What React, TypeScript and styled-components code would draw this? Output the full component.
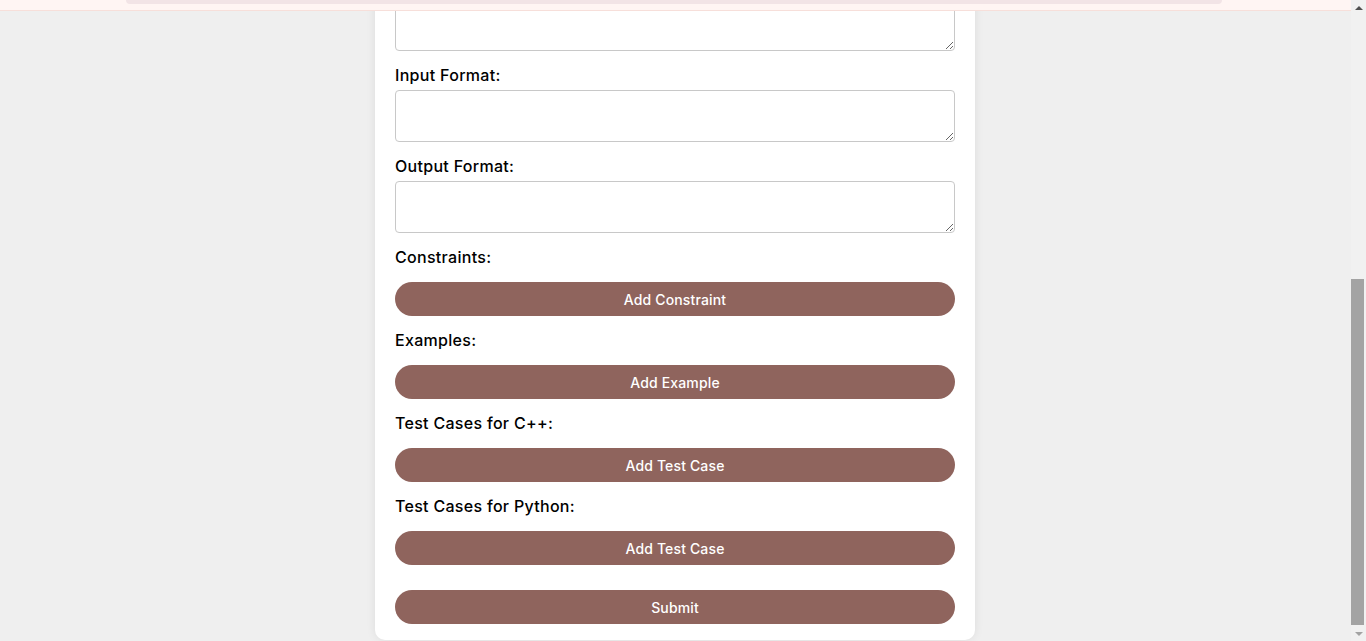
import React, { useEffect, useLayoutEffect, useState } from "react";
import styled, { createGlobalStyle } from "styled-components";

const Global = createGlobalStyle`
  *, *::before, *::after { box-sizing: border-box; }
  html { scroll-behavior: auto; }
  body {
    margin: 0;
    background: #efefef;
    font-family: "Inter", "Open Sans", "Liberation Sans", sans-serif;
    color: #000;
  }
`;

const Header = styled.header`
  position: fixed;
  top: 0;
  left: 0;
  right: 15px;
  height: 11px;
  background: #fff5f3;
  border-bottom: 1px solid #f7dfda;
  z-index: 10;
  display: flex;
  padding: 0 129px 0 126px;
`;

const NavPill = styled.div`
  flex: 1;
  height: 4px;
  background: #f2e4e6;
  border-radius: 0 0 6px 6px;
`;

const ScrollBar = styled.div`
  position: fixed;
  top: 0;
  right: 0;
  bottom: 0;
  width: 15px;
  background: #f1f1f1;
  display: flex;
  flex-direction: column;
  z-index: 20;
`;

const Arrow = styled.div<{ $down?: boolean; $color: string }>`
  height: 15px;
  flex: none;
  display: flex;
  align-items: center;
  justify-content: center;
  &::after {
    content: "";
    width: 0;
    height: 0;
    border-left: 4px solid transparent;
    border-right: 4px solid transparent;
    ${(p) =>
      p.$down
        ? `border-top: 4px solid ${p.$color};`
        : `border-bottom: 4px solid ${p.$color};`}
  }
`;

const Track = styled.div`
  flex: 1;
  display: flex;
  flex-direction: column;
  justify-content: flex-end;
  padding: 0 2px 1px 0;
`;

const Thumb = styled.div`
  width: 100%;
  background: #a3a3a3;
`;

const Main = styled.main`
  padding: 60px 16px 1px 0;
`;

const Card = styled.div`
  width: 600px;
  margin: 0 auto;
  background: #fff;
  border-radius: 10px;
  box-shadow: 0 0 10px rgba(0, 0, 0, 0.08);
  padding: 20px 20px 16px;
  display: flex;
  flex-direction: column;
`;

const Title = styled.h2`
  margin: 0 0 20px;
  height: 30px;
  line-height: 30px;
  font-size: 24px;
  font-weight: 600;
  text-align: center;
`;

const Field = styled.div<{ $last?: boolean }>`
  display: flex;
  flex-direction: column;
  margin-bottom: ${(p) => (p.$last ? "25px" : "14px")};
`;

const Label = styled.label`
  display: block;
  font-size: 16px;
  line-height: 19px;
  height: 19px;
  padding-top: 1px;
  font-weight: 500;
  color: #000;
  margin-bottom: 6px;
  letter-spacing: 0.3px;
`;

const Input = styled.input`
  display: block;
  width: 100%;
  height: 38px;
  border: 1px solid #ccc;
  border-radius: 4px;
  padding: 8px;
  font: inherit;
`;

const TextArea = styled.textarea<{ $h: number }>`
  display: block;
  width: 100%;
  height: ${(p) => p.$h}px;
  border: 1px solid #c8c8c8;
  border-radius: 4px;
  padding: 8px;
  font: inherit;
  resize: vertical;
  background: #fff;
`;

const Button = styled.button<{ $gap?: boolean }>`
  display: block;
  width: 100%;
  height: 34px;
  margin-top: ${(p) => (p.$gap ? "10px" : "0")};
  border: none;
  border-radius: 17px;
  background: #8f645d;
  color: #fff;
  font-family: "Inter", "Open Sans", "Liberation Sans", sans-serif;
  font-size: 14px;
  font-weight: 450;
  letter-spacing: 0.15px;
  cursor: pointer;
`;

export default function App() {
  const [thumb, setThumb] = useState(346);

  useLayoutEffect(() => {
    const doc = document.documentElement;
    window.scrollTo(0, doc.scrollHeight);
    const track = window.innerHeight - 30;
    setThumb(Math.round((track * window.innerHeight) / doc.scrollHeight));
  }, []);
  useEffect(() => {
    window.scrollTo(0, document.documentElement.scrollHeight);
    const t = setTimeout(() => window.scrollTo(0, document.documentElement.scrollHeight), 50);
    return () => clearTimeout(t);
  }, []);

  return (
    <>
      <Global />
      <Header>
        <NavPill />
      </Header>
      <ScrollBar>
        <Arrow $color="#505050" />
        <Track>
          <Thumb style={{ height: thumb }} />
        </Track>
        <Arrow $down $color="#a3a3a3" />
      </ScrollBar>
      <Main>
        <Card>
          <Title>Add New Problem</Title>
          <Field>
            <Label>Title:</Label>
            <Input type="text" />
          </Field>
          <Field>
            <Label>Difficulty:</Label>
            <Input type="text" />
          </Field>
          <Field>
            <Label>Description:</Label>
            <TextArea $h={233} />
          </Field>
          <Field>
            <Label>Input Format:</Label>
            <TextArea $h={52} />
          </Field>
          <Field>
            <Label>Output Format:</Label>
            <TextArea $h={52} />
          </Field>
          <Field>
            <Label>Constraints:</Label>
            <Button $gap type="button">Add Constraint</Button>
          </Field>
          <Field>
            <Label>Examples:</Label>
            <Button $gap type="button">Add Example</Button>
          </Field>
          <Field>
            <Label>Test Cases for C++:</Label>
            <Button $gap type="button">Add Test Case</Button>
          </Field>
          <Field $last>
            <Label>Test Cases for Python:</Label>
            <Button $gap type="button">Add Test Case</Button>
          </Field>
          <Button type="submit">Submit</Button>
        </Card>
      </Main>
    </>
  );
}
